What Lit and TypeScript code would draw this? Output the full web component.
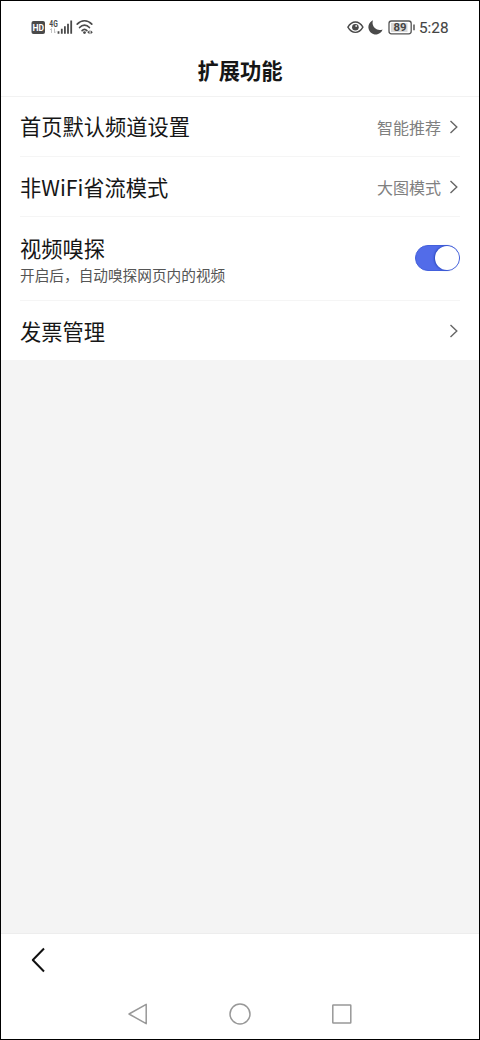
import { LitElement, html, css, nothing } from "lit";
import { customElement, property, state } from "lit/decorators.js";

@customElement("status-bar")
class StatusBar extends LitElement {
  static styles = css`
    :host { display: flex; justify-content: space-between; height: 46px; padding: 17px 31px 0 30px; box-sizing: border-box; }
    .group { display: flex; height: 18px; align-items: center; }
    svg { display: block; overflow: visible; }
    .small { font-family: "Roboto", sans-serif; font-weight: 700; }
    .time { font: 400 15.3px/18px "Roboto", sans-serif; color: #444; margin-left: 4px; padding-top: 2px; width: 29px; white-space: nowrap; -webkit-text-stroke: 0.1px #444; }
  `;
  render() {
    return html`
      <div class="group">
        <svg width="64" height="18" viewBox="31 18 64 18">
          <rect x="31.5" y="21" width="13.5" height="13" rx="2" fill="#4a4a4a" />
          <text class="small" x="32.5" y="30.9" font-size="9" textLength="11.6" lengthAdjust="spacingAndGlyphs" fill="#fff">HD</text>
          <text class="small" x="49.3" y="27" font-size="8.4" textLength="8.4" lengthAdjust="spacingAndGlyphs" fill="#4a4a4a">4G</text>
          <path d="M51.5 33v-4.5l-1.5 1.5M54.5 28.5V33l1.5-1.5" fill="none" stroke="#c4c4c4" stroke-width="1" />
          <path d="M58.5 33.8v-2.6M61.8 33.8v-5M64.9 33.8v-7.5M68 33.8v-10M71.2 33.8V20.5" stroke="#4a4a4a" stroke-width="1.8" />
          <g fill="none" stroke="#4a4a4a" stroke-width="1.7" stroke-linecap="round">
            <path d="M77.2 24.1c4.2-4.5 10.4-4.5 14.6 0" />
            <path d="M79.6 27.5c2.8-3.1 7-3.1 9.8 0" />
            <path d="M82.1 30.7c1.6-1.7 3.2-1.7 4.8 0" />
          </g>
          <circle cx="84.5" cy="32.6" r="1.4" fill="#4a4a4a" />
          <path d="M87.3 32.3l2.2-2v4zM92.8 32.3l-2.2-2v4z" fill="#4a4a4a" />
        </svg>
      </div>
      <div class="group">
        <svg width="69" height="18" viewBox="346 18 69 18">
          <path d="M347.9 27.2c3.9-6.9 11.1-6.9 15 0c-3.9 6.9-11.1 6.9-15 0z" fill="none" stroke="#4a4a4a" stroke-width="1.4" />
          <circle cx="355.4" cy="27.2" r="3.3" fill="#4a4a4a" />
          <circle cx="356.2" cy="26.1" r="1" fill="#ddd" />
          <path d="M373 20.3A7.3 7.3 0 1 0 382.6 29.4A7.2 7.2 0 0 1 373 20.3z" fill="#4a4a4a" />
          <rect x="389" y="21" width="22.2" height="12.8" rx="2.5" fill="#fff" stroke="#555" stroke-width="1.3" />
          <rect x="391" y="23" width="16.5" height="9" fill="#d9d9d9" />
          <path d="M414 24.4v5.8" stroke="#555" stroke-width="1.5" />
          <text class="small" x="393.4" y="31.2" font-size="11" textLength="13" lengthAdjust="spacingAndGlyphs" fill="#444">89</text>
        </svg>
        <span class="time">5:28</span>
      </div>
    `;
  }
}

@customElement("setting-row")
class SettingRow extends LitElement {
  @property() label = "";
  @property() note = "";
  @property() value = "";
  @property({ type: Boolean }) toggle = false;
  @state() private on = true;
  static styles = css`
    :host { display: flex; align-items: center; justify-content: space-between; box-sizing: border-box; margin: 0 19px; border-bottom: 1px solid #f5f5f5; }
    :host(:last-of-type) { border-bottom: 0; }
    .label { font-size: 21.25px; line-height: 30px; color: #161616; white-space: nowrap; margin-bottom: 1px; }
    .note { font-size: 14.67px; line-height: 22px; color: #555; white-space: nowrap; margin-bottom: -1px; }
    .end { display: flex; align-items: center; gap: 8px; }
    .value { font-size: 16px; line-height: 24px; color: #808080; }
    .chevron { display: block; margin-right: 1px; }
    .switch { width: 45px; height: 26px; border: 1px solid #4360dc; border-radius: 13px; background: #526ce9; padding: 0; box-sizing: border-box; display: flex; justify-content: flex-end; align-items: center; margin-bottom: 1px; }
    .switch.off { justify-content: flex-start; background: #ccc; border-color: #bbb; }
    .knob { width: 24px; height: 24px; border-radius: 50%; background: #fff; box-shadow: -1px 0 2px #2846bd; }
  `;
  render() {
    return html`
      <div>
        <div class="label">${this.label}</div>
        ${this.note ? html`<div class="note">${this.note}</div>` : nothing}
      </div>
      ${this.toggle
        ? html`<button class="switch ${this.on ? "" : "off"}" aria-label=${this.label} @click=${() => (this.on = !this.on)}><span class="knob"></span></button>`
        : html`<div class="end">
            <span class="value">${this.value}</span>
            <svg class="chevron" width="10" height="14" viewBox="0 0 10 14"><path d="M1.5 1L7.8 7l-6.3 6" fill="none" stroke="#666" stroke-width="1.4" /></svg>
          </div>`}
    `;
  }
}

@customElement("app-root")
class AppRoot extends LitElement {
  static styles = css`
    :host { display: flex; flex-direction: column; box-sizing: border-box; width: 480px; height: 1040px; border: 1px solid #000; background: #fff; font-family: "Noto Sans CJK SC", sans-serif; }
    .title { height: 50px; box-sizing: border-box; border-bottom: 1px solid #f2f2f2; margin: 0; text-align: center; font-size: 21.3px; line-height: 46px; font-weight: 700; color: #161616; }
    .row { height: 60px; }
    .row.second { padding-top: 1px; }
    .row.tall { height: 84px; }
    .row.last { height: 59px; padding-top: 1px; }
    .blank { flex: 1; background: #f4f4f4; box-sizing: border-box; border-bottom: 1px solid #ededed; }
    .toolbar { height: 53px; display: flex; align-items: center; padding: 0 0 2px 29px; box-sizing: border-box; }
    .nav { height: 52px; display: flex; justify-content: center; align-items: center; gap: 78px; padding: 2px 1px 0 0; box-sizing: border-box; }
    .nav svg { display: block; fill: none; stroke: #989898; stroke-width: 1.5; stroke-linejoin: round; }
  `;
  render() {
    return html`
      <status-bar></status-bar>
      <h1 class="title">扩展功能</h1>
      <setting-row class="row" label="首页默认频道设置" value="智能推荐"></setting-row>
      <setting-row class="row second" label="非WiFi省流模式" value="大图模式"></setting-row>
      <setting-row class="row tall" label="视频嗅探" note="开启后，自动嗅探网页内的视频" toggle></setting-row>
      <setting-row class="row last" label="发票管理"></setting-row>
      <div class="blank"></div>
      <div class="toolbar">
        <svg width="18" height="26" viewBox="0 0 18 26"><path d="M14 1.5L2.8 13L14 24.5" fill="none" stroke="#111" stroke-width="2" stroke-linejoin="round" /></svg>
      </div>
      <div class="nav">
        <svg width="24" height="24" viewBox="0 0 24 24"><path d="M20.2 2.3v19.4L3 12z" /></svg>
        <svg width="24" height="24" viewBox="0 0 24 24"><circle cx="12" cy="12" r="10" /></svg>
        <svg width="24" height="24" viewBox="0 0 24 24"><rect x="2.8" y="3" width="18" height="18" rx="0.5" /></svg>
      </div>
    `;
  }
}
